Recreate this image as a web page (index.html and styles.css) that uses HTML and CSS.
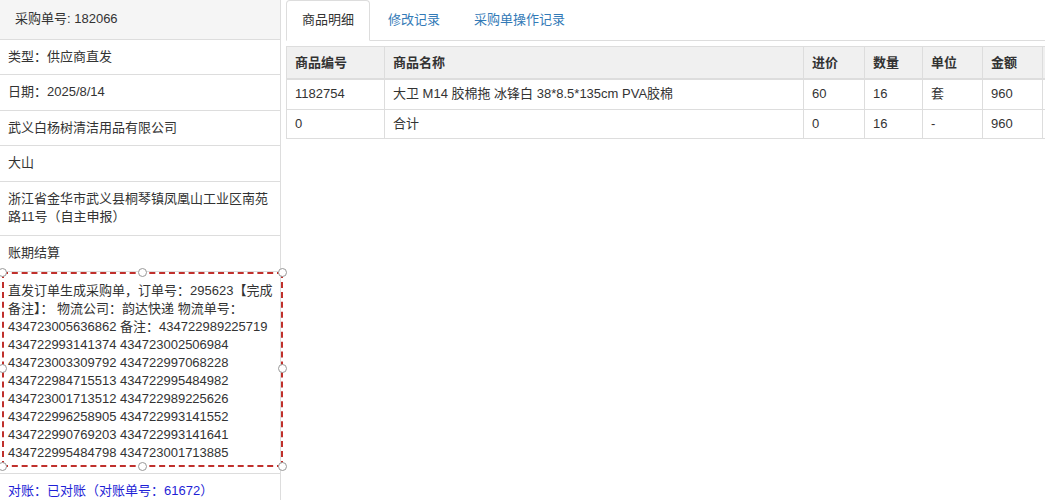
FILE: index.html
```html
<!DOCTYPE html>
<html lang="zh-CN">
<head>
    <meta charset="UTF-8">
    <title>采购单详情</title>
    <link rel="stylesheet" href="styles.css">
</head>
<body>
<div class="page">

    <!-- 左侧：采购单信息 -->
    <aside class="info">
        <div class="info-head">采购单号: 182066</div>
        <div class="info-row">类型：供应商直发</div>
        <div class="info-row">日期：2025/8/14</div>
        <div class="info-row">武义白杨树清洁用品有限公司</div>
        <div class="info-row">大山</div>
        <div class="info-row">浙江省金华市武义县桐琴镇凤凰山工业区南苑路11号（自主申报）</div>
        <div class="info-row">账期结算</div>
        <div class="info-row note-row">
            <div class="note">直发订单生成采购单，订单号：295623【完成备注】： 物流公司：韵达快递 物流单号：434723005636862 备注：434722989225719 434722993141374 434723002506984 434723003309792 434722997068228 434722984715513 434722995484982 434723001713512 434722989225626 434722996258905 434722993141552 434722990769203 434722993141641 434722995484798 434723001713885
                <span class="handle tl"></span>
                <span class="handle tc"></span>
                <span class="handle tr"></span>
                <span class="handle ml"></span>
                <span class="handle mr"></span>
                <span class="handle bl"></span>
                <span class="handle bc"></span>
                <span class="handle br"></span>
            </div>
        </div>
        <div class="info-row checked">对账：已对账（对账单号：61672）</div>
    </aside>

    <!-- 右侧：明细 -->
    <main class="detail">
        <ul class="tabs">
            <li class="active"><a>商品明细</a></li>
            <li><a>修改记录</a></li>
            <li><a>采购单操作记录</a></li>
        </ul>

        <table class="goods">
            <colgroup>
                <col style="width:98px">
                <col style="width:419px">
                <col style="width:61px">
                <col style="width:58px">
                <col style="width:60px">
                <col style="width:60px">
                <col>
            </colgroup>
            <thead>
                <tr>
                    <th>商品编号</th>
                    <th>商品名称</th>
                    <th>进价</th>
                    <th>数量</th>
                    <th>单位</th>
                    <th>金额</th>
                    <th></th>
                </tr>
            </thead>
            <tbody>
                <tr>
                    <td>1182754</td>
                    <td>大卫 M14 胶棉拖 冰锋白 38*8.5*135cm PVA胶棉</td>
                    <td>60</td>
                    <td>16</td>
                    <td>套</td>
                    <td>960</td>
                    <td></td>
                </tr>
                <tr>
                    <td>0</td>
                    <td>合计</td>
                    <td>0</td>
                    <td>16</td>
                    <td>-</td>
                    <td>960</td>
                    <td></td>
                </tr>
            </tbody>
        </table>
    </main>

</div>
</body>
</html>
```

FILE: styles.css
```css
body {
    margin: 0;
    font-family: "Liberation Sans", Arial, "Noto Sans CJK SC", sans-serif;
    font-size: 13px;
    line-height: 1.42857;
    color: #333;
    background: #fff;
}
.page {
    display: flex;
    height: 500px;
    overflow: hidden;
}
.info {
    width: 280px;
    flex: none;
    border-right: 1px solid #ddd;
}
.info-head {
    padding: 10px 15px;
    background-color: #f5f5f5;
    border-bottom: 1px solid #ddd;
}
.info-row {
    padding: 8px;
    border-bottom: 1px solid #ddd;
}
.note-row {
    padding: 0 0 6px 0;
}
.note {
    position: relative;
    margin: 0 -3px 0 2px;
    padding: 8px 4px 3px 4px;
    border: 2px dashed #c0302c;
    line-height: 18px;
}
.handle {
    position: absolute;
    width: 7px;
    height: 7px;
    border: 1px solid #999;
    border-radius: 50%;
    background: #fff;
}
.handle.tl { left: -6px; top: -6px; }
.handle.tc { left: calc(50% - 5px); top: -6px; }
.handle.tr { right: -6px; top: -6px; }
.handle.ml { left: -6px; top: calc(50% - 5px); }
.handle.mr { right: -6px; top: calc(50% - 5px); }
.handle.bl { left: -6px; bottom: -6px; }
.handle.bc { left: calc(50% - 5px); bottom: -6px; }
.handle.br { right: -6px; bottom: -6px; }
.checked {
    color: #1f1fd6;
    border-bottom: none;
}
.detail {
    flex: 1;
    margin-left: 5px;
    overflow: hidden;
}
.tabs {
    display: flex;
    margin: 0;
    padding: 0;
    list-style: none;
    border-bottom: 1px solid #ddd;
}
.tabs li {
    margin-bottom: -1px;
    margin-right: 2px;
}
.tabs a {
    display: block;
    padding: 10px 15px;
    border: 1px solid transparent;
    border-radius: 4px 4px 0 0;
    color: #337ab7;
    cursor: pointer;
}
.tabs li.active a {
    color: #333;
    background: #fff;
    border-color: #ddd #ddd transparent #ddd;
}
.goods {
    width: 856px;
    margin-top: 5px;
    table-layout: fixed;
    border-collapse: collapse;
}
.goods th, .goods td {
    border: 1px solid #ddd;
    text-align: left;
    white-space: nowrap;
    overflow: hidden;
}
.goods th {
    padding: 7px 8px 6px;
    background-color: #f0f0f0;
    border-bottom: 2px solid #ddd;
}
.goods td {
    padding: 5px 8px;
}
```
